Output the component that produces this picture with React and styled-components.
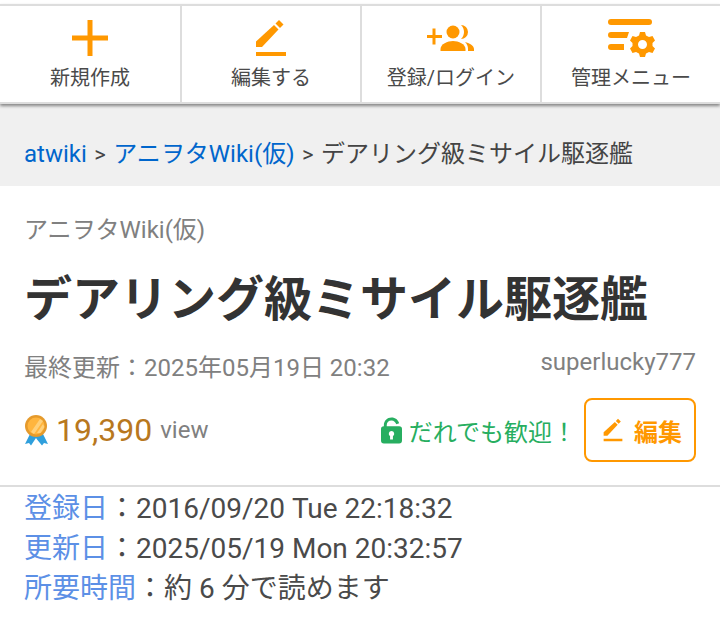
import React from "react";
import styled, { createGlobalStyle } from "styled-components";

const Global = createGlobalStyle`
  html, body { margin: 0; padding: 0; background: #fff; }
  body { font-family: Roboto, "Noto Sans CJK JP", sans-serif; color: #333; }
`;
const Page = styled.div`width: 720px; height: 622px; overflow: hidden; background: #fff; padding-top: 4px; box-sizing: border-box;`;
const Toolbar = styled.nav`
  display: grid; grid-template-columns: 182px 180px 180px 178px; height: 100px; box-sizing: border-box;
  border-top: 2px solid #ddd; border-bottom: 2px solid #ddd; box-shadow: 0 2px 3px rgba(0,0,0,.45);
  position: relative; background: #fff;
`;
const ToolItem = styled.a`
  display: flex; flex-direction: column; align-items: center; box-sizing: border-box;
  border-right: ${p => (p.$last ? "none" : "2px solid #ddd")}; color: #4a4a4a; font-size: 20px; line-height: 28px;
`;
const ToolIcon = styled.svg`width: 48px; height: 48px; fill: #ff9800; margin-top: 8px; margin-bottom: 2px; display: block;`;
const Crumbs = styled.div`
  background: #f0f0f0; height: 82px; box-sizing: border-box; padding: 32px 24px 0; font-size: 24px; line-height: 36px; color: #444; white-space: nowrap;
`;
const Link = styled.a`color: #0066cc;`;
const Sep = styled.span`font-size: 22px; margin: 0 7.5px;`;
const Head = styled.header`padding: 26px 24px 0; border-bottom: 2px solid #ddd; box-sizing: border-box; height: 301px;`;
const SiteName = styled.div`font-size: 24px; line-height: 36px; color: #808080;`;
const Title = styled.h1`font-size: 48px; line-height: 64px; font-weight: 700; margin: 20px 0 0; color: #333; white-space: nowrap;`;
const MetaRow = styled.div`display: flex; justify-content: space-between; margin-top: 20px; color: #808080; font-size: 24px; line-height: 32px;`;
const Author = styled.span`margin-top: -6px;`;
const Stats = styled.div`display: flex; align-items: center; justify-content: space-between; margin-top: 14px;`;
const Views = styled.div`display: flex; align-items: center;`;
const Count = styled.span`font-size: 32px; color: #b8781e; margin: 0 8px 0 7px;`;
const ViewLabel = styled.span`font-size: 24px; color: #808080;`;
const Right = styled.div`display: flex; align-items: center;`;
const Open = styled.span`display: flex; align-items: center; gap: 7px; color: #27ae60; font-size: 24px; margin-right: 8px;`;
const EditBtn = styled.a`
  display: flex; align-items: center; justify-content: center; gap: 6px; width: 112px; height: 64px; box-sizing: border-box; border: 2px solid #ff9800; border-radius: 8px;
  color: #ff9800; font-weight: 700; font-size: 24px;
`;
const Info = styled.div`padding: 2px 24px 0; font-size: 28px; line-height: 40px; color: #4a4a4a;`;
const InfoRow = styled.div`white-space: nowrap;`;
const InfoLabel = styled.span`color: #5c90e6;`;
const Small = styled.svg`display: block;`;

const PencilPaths = () => (
  <>
    <path d="M9 33v-5.500L27 11l4.500 4.500L15 33z" />
    <path d="M28.500 9.500L32 6l4.500 4.500L33 14z" />
    <path d="M9 38h30v4H9z" />
  </>
);

function Medal() {
  return (
    <Small width="25" height="32" viewBox="0 0 25 32">
      <path d="M6 20L1 30l4-1 2 2.500 4-6 1-1.500 1 1.500 5 6 2-2.500 4 1-5-10z" fill="#2f9fdc" />
      <circle cx="12" cy="12" r="11" fill="#e59a2c" />
      <circle cx="12" cy="12" r="8.500" fill="#ffb53e" />
      <path d="M7 18L16 5l3 2-9 13zM13 19l6-9 1.500 3-4 6z" fill="#ffd07a" />
    </Small>
  );
}

export default function App() {
  return (
    <Page>
      <Global />
      <Toolbar>
        <ToolItem>
          <ToolIcon viewBox="0 0 48 48"><path d="M21.500 6h5v15.500H42v5H26.500V42h-5V26.500H6v-5h15.500z" /></ToolIcon>
          新規作成
        </ToolItem>
        <ToolItem>
          <ToolIcon viewBox="0 0 48 48"><PencilPaths /></ToolIcon>
          編集する
        </ToolItem>
        <ToolItem>
          <ToolIcon viewBox="0 0 48 48">
            <g transform="translate(-2 0)">
              <path d="M2 21h5.500v-6.500h3V21H17v3h-6.500v6.500h-3V24H2z" />
              <circle cx="28" cy="18" r="6.500" />
              <path d="M15.500 37v-2c0-5 7-8 12.500-8s12.500 3 12.500 8v2z" />
              <path d="M36 11a7 7 0 0 1 0 14c2-2 3-4.500 3-7s-1-5-3-7z" />
              <path d="M40 28c4 1 9 3.500 9 7v2h-6v-2c0-3-1-5-3-7z" />
            </g>
          </ToolIcon>
          登録/ログイン
        </ToolItem>
        <ToolItem $last>
          <ToolIcon viewBox="0 0 48 48">
            <rect x="1" y="5" width="44" height="6" rx="3" />
            <path d="M4 18h18l-2 6H4a3 3 0 0 1 0-6zM4 30h13v6H4a3 3 0 0 1 0-6z" />
            <path fillRule="evenodd" d="M33 18h5l1 3.500 3 1.500 3.500-1 2.500 4.500-2.500 2.500v3l2.500 2.500-2.500 4.500-3.500-1-3 1.500-1 3.500h-5l-1-3.500-3-1.500-3.500 1-2.500-4.500 2.500-2.500v-3l-2.500-2.500 2.500-4.500 3.500 1 3-1.500zm2.500 8a4.500 4.500 0 1 0 0 9 4.500 4.500 0 0 0 0-9z" />
          </ToolIcon>
          管理メニュー
        </ToolItem>
      </Toolbar>
      <Crumbs>
        <Link>atwiki</Link><Sep>&gt;</Sep><Link>アニヲタWiki(仮)</Link><Sep>&gt;</Sep>デアリング級ミサイル駆逐艦
      </Crumbs>
      <Head>
        <SiteName>アニヲタWiki(仮)</SiteName>
        <Title>デアリング級ミサイル駆逐艦</Title>
        <MetaRow>
          <span>最終更新：2025年05月19日 20:32</span>
          <Author>superlucky777</Author>
        </MetaRow>
        <Stats>
          <Views><Medal /><Count>19,390</Count><ViewLabel>view</ViewLabel></Views>
          <Right>
            <Open>
              <Small width="21" height="27" viewBox="0 0 22 27"><path fill="#27ae60" fillRule="evenodd" d="M11 0c4 0 7 2.500 8 6l-3 1c-.5-2-2.500-4-5-4-3 0-5 2-5 5v1h13a3 3 0 0 1 3 3v12a3 3 0 0 1-3 3H3a3 3 0 0 1-3-3V12a3 3 0 0 1 3-3V8c0-4.500 3.500-8 8-8zM11 14a3 3 0 0 0-1.500 5.500V23h3v-3.500A3 3 0 0 0 11 14z" /></Small>
              だれでも歓迎！
            </Open>
            <EditBtn>
              <Small width="30" height="30" viewBox="0 0 48 48" fill="#ff9800"><PencilPaths /></Small>
              編集
            </EditBtn>
          </Right>
        </Stats>
      </Head>
      <Info>
        <InfoRow><InfoLabel>登録日</InfoLabel>：2016/09/20 Tue 22:18:32</InfoRow>
        <InfoRow><InfoLabel>更新日</InfoLabel>：2025/05/19 Mon 20:32:57</InfoRow>
        <InfoRow><InfoLabel>所要時間</InfoLabel>：約 6 分で読めます</InfoRow>
      </Info>
    </Page>
  );
}
